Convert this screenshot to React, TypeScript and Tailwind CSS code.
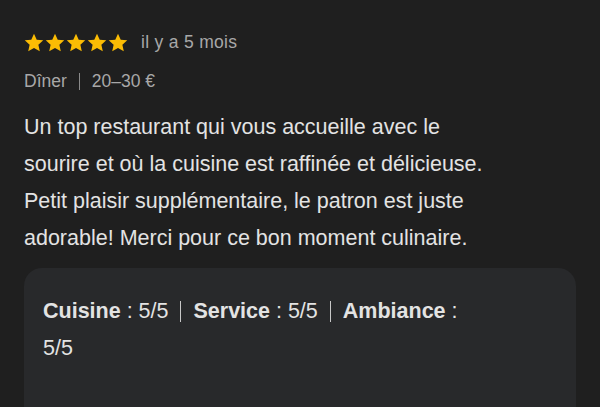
import React from "react";

function Star() {
  return (
    <svg width="20" height="19" viewBox="0 0 24 23" className="block">
      <path
        d="M12 0.8l3.3 7.3 7.9 0.8-5.9 5.4 1.7 7.8L12 18.1 5 22.1l1.7-7.8L0.8 8.9l7.9-0.8z"
        fill="#fbbc04"
      />
    </svg>
  );
}

export default function App() {
  return (
    <div
      className="w-[600px] h-[407px] overflow-hidden bg-[#1f1f1f] px-6"
      style={{ fontFamily: '"Liberation Sans", Arial, sans-serif' }}
    >
      <div className="flex items-center pt-[32px] h-[53px]">
        <div className="flex gap-[1px]">
          <Star />
          <Star />
          <Star />
          <Star />
          <Star />
        </div>
        <span className="ml-[13px] text-[17.5px] text-[#a8a8a8] tracking-[0.3px]">il y a 5 mois</span>
      </div>
      <div className="mt-[16px] flex items-center text-[17.5px] text-[#a8a8a8] leading-[24px]">
        <span>Dîner</span>
        <span className="mx-[12px] inline-block w-[1px] h-[17px] bg-[#8a8a8a]"></span>
        <span>20–30 €</span>
      </div>
      <p className="mt-[16px] w-[466px] text-[21.5px] leading-[37px] text-[#e3e3e3]">
        Un top restaurant qui vous accueille avec le sourire et où la cuisine est raffinée et
        délicieuse. Petit plaisir supplémentaire, le patron est juste adorable! Merci pour ce bon
        moment culinaire.
      </p>
      <div className="mt-[11px] rounded-[18px] bg-[#28292b] h-[200px] px-[19px] pt-[25px]">
        <p className="w-[430px] text-[21.5px] leading-[37px] text-[#e3e3e3]">
          <span className="font-bold">Cuisine</span>
          <span> : 5/5</span>
          <span className="inline-block mx-[12px] w-[1px] h-[21px] bg-[#c8c8c8] align-[-4px]"></span>
          <span className="font-bold">Service</span>
          <span> : 5/5</span>
          <span className="inline-block mx-[12px] w-[1px] h-[21px] bg-[#c8c8c8] align-[-4px]"></span>
          <span className="font-bold">Ambiance</span>
          <span> : 5/5</span>
        </p>
      </div>
    </div>
  );
}
